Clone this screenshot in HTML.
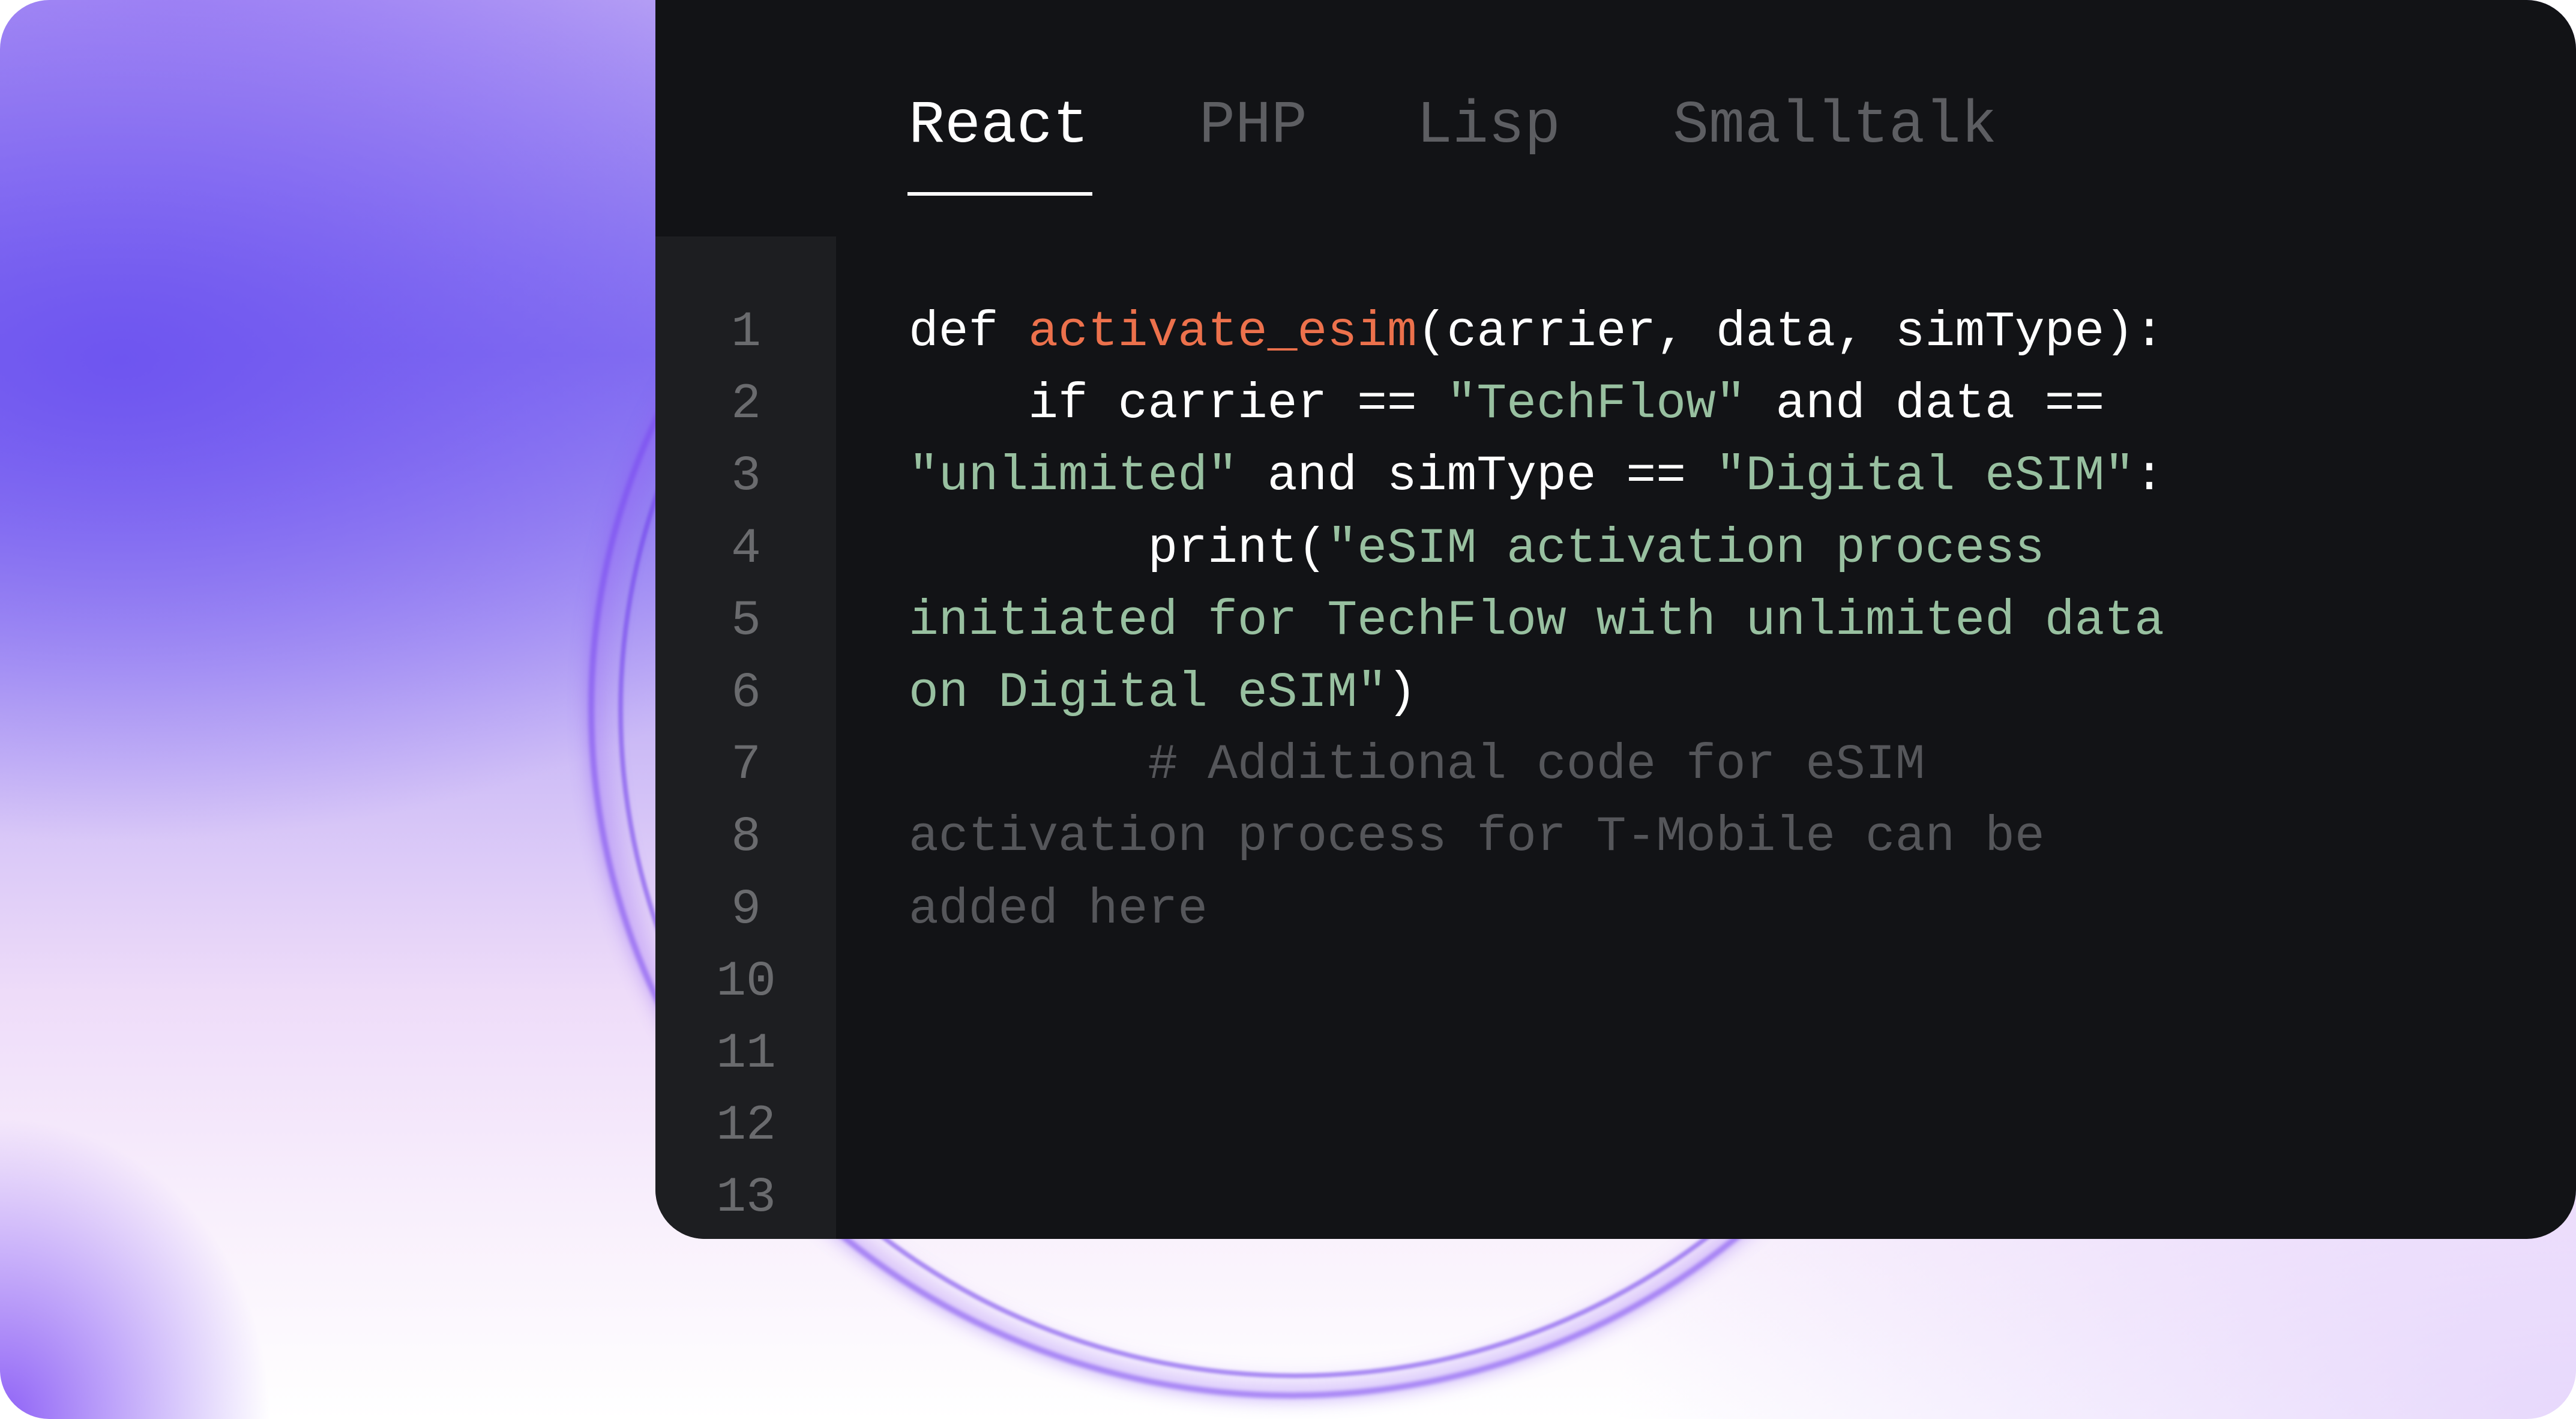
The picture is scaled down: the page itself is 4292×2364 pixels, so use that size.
<!DOCTYPE html>
<html><head><meta charset="utf-8"><style>
html,body{margin:0;padding:0;background:#fff;}
body{width:4292px;height:2364px;overflow:hidden;position:relative;}
.bg{position:absolute;left:0;top:0;width:4292px;height:2364px;border-radius:82px;overflow:hidden;
background:
radial-gradient(ellipse 450px 500px at 0px 2364px, rgba(130,80,245,0.9), rgba(130,80,245,0) 100%),
radial-gradient(ellipse 1400px 800px at 200px 600px, rgba(110,85,240,1), rgba(110,85,240,0) 100%),
radial-gradient(ellipse 1200px 500px at 300px 0px, rgba(170,140,245,0.9), rgba(170,140,245,0) 100%),
radial-gradient(ellipse 1600px 900px at 4292px 2364px, rgba(215,190,250,0.6), rgba(255,255,255,0) 100%),
linear-gradient(180deg,#b9a6f4 0%,#8b78f2 25%,#c7b6f6 50%,#eedcf9 70%,#f8effc 85%,#fff 100%);}
.ring{position:absolute;left:990px;top:40px;width:2320px;height:2280px;border-radius:50%;
box-shadow:0 0 0 10px rgba(120,70,240,0.5), 0 0 30px 12px rgba(140,90,245,0.45), inset 0 0 40px 14px rgba(150,100,245,0.4);filter:blur(3px);}
.ring2{position:absolute;left:1030px;top:70px;width:2240px;height:2210px;border-radius:50%;border:8px solid rgba(110,60,235,0.55);filter:blur(2px);}
.card{position:absolute;left:1092px;top:0;width:3200px;height:2064px;background:#121316;border-radius:0 82px 82px 82px;overflow:hidden;}
.gutter{position:absolute;left:0;top:394px;width:301px;height:1670px;background:#1d1e21;}
.tab{position:absolute;top:146px;font-family:"Liberation Mono",monospace;font-size:100px;line-height:130px;color:#5d5e62;white-space:pre;}
.ul{position:absolute;left:420px;top:320px;width:308px;height:6px;background:#fff;}
.code{position:absolute;left:422px;top:493px;font-family:"Liberation Mono",monospace;font-size:83px;line-height:120.2px;color:#fff;white-space:pre;}
.ln{position:absolute;left:0;width:302px;top:493px;text-align:center;font-family:"Liberation Mono",monospace;font-size:83px;line-height:120.2px;color:#6a6b6e;white-space:pre;}
.o{color:#ec714c}.g{color:#98c0a0}.c{color:#55565a}
</style></head><body>
<div class="bg"><div class="ring"></div><div class="ring2"></div></div>
<div class="card">
<div class="gutter"></div>
<div class="tab" style="left:422px;color:#fff">React</div>
<div class="tab" style="left:906px">PHP</div>
<div class="tab" style="left:1268px">Lisp</div>
<div class="tab" style="left:1695px">Smalltalk</div>
<div class="ul"></div>
<div class="ln">1
2
3
4
5
6
7
8
9
10
11
12
13</div>
<div class="code">def <span class="o">activate_esim</span>(carrier, data, simType):
    if carrier == <span class="g">"TechFlow"</span> and data ==
<span class="g">"unlimited"</span> and simType == <span class="g">"Digital eSIM"</span>:
        print(<span class="g">"eSIM activation process
initiated for TechFlow with unlimited data
on Digital eSIM"</span>)
<span class="c">        # Additional code for eSIM
activation process for T-Mobile can be
added here</span></div>
</div>
</body></html>
